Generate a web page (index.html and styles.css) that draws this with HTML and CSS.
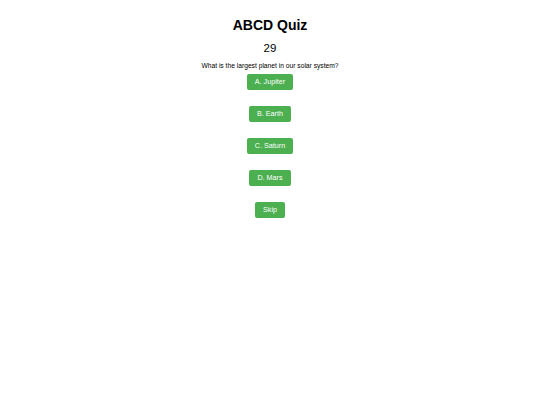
FILE: index.html
```html
<!DOCTYPE html>
<html>
<head>
<meta charset="utf-8">
<link rel="stylesheet" href="styles.css">
</head>
<body>
<div class="quiz">
  <h1 class="title">ABCD Quiz</h1>
  <div class="timer">29</div>
  <p class="question">What is the largest planet in our solar system?</p>
  <div class="options">
    <button class="btn">A. Jupiter</button>
    <button class="btn">B. Earth</button>
    <button class="btn">C. Saturn</button>
    <button class="btn">D. Mars</button>
    <button class="btn">Skip</button>
  </div>
</div>
</body>
</html>
```
FILE: styles.css
```css
html, body {
  margin: 0;
  padding: 0;
  background: #ffffff;
}
body {
  font-family: "Liberation Sans", Arial, sans-serif;
  color: #000;
}
.quiz {
  display: flex;
  flex-direction: column;
  align-items: center;
  padding-top: 16px;
}
.title {
  font-size: 14px;
  font-weight: bold;
  margin: 0;
  line-height: 18px;
}
.timer {
  font-size: 11.5px;
  margin-top: 7px;
  line-height: 14px;
}
.question {
  font-size: 6.7px;
  margin: 6px 0 0 0;
  line-height: 10px;
}
.options {
  display: flex;
  flex-direction: column;
  align-items: center;
  gap: 16px;
  margin-top: 3px;
}
.btn {
  background: #4caf50;
  color: #fff;
  border: none;
  border-radius: 2px;
  font-family: "Liberation Sans", Arial, sans-serif;
  font-size: 7.2px;
  height: 16px;
  padding: 0 8px;
  line-height: 16px;
}
```
